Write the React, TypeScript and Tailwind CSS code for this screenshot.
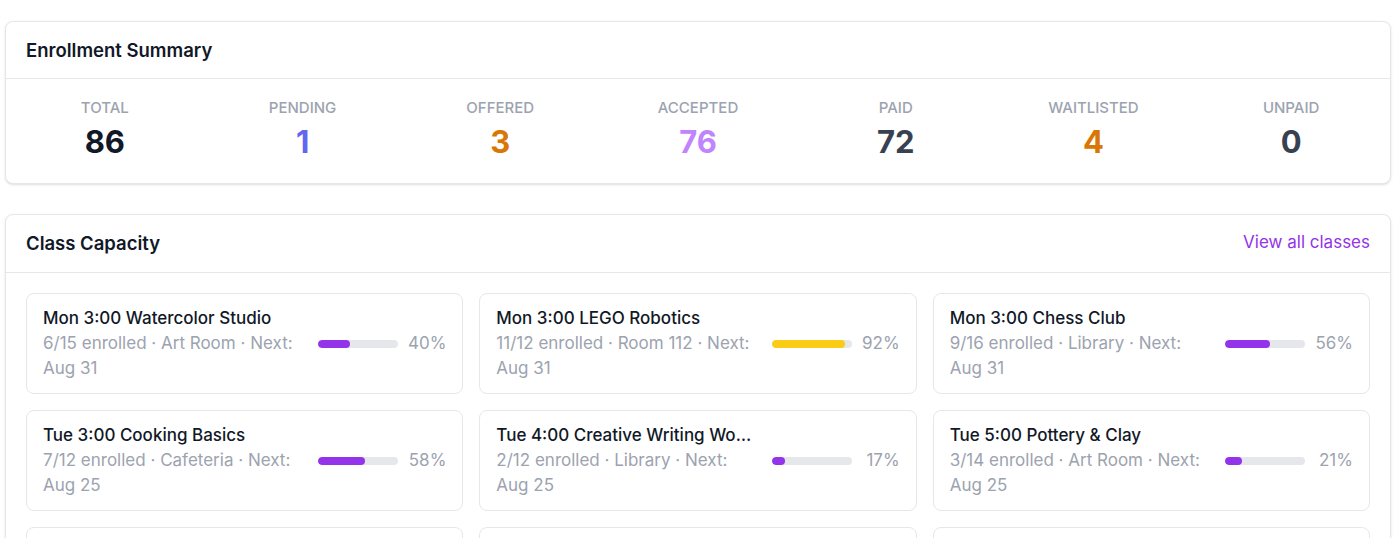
import React from "react";

type Stat = { label: string; value: number; color: string };

const STATS: Stat[] = [
  { label: "Total", value: 86, color: "text-[#111827]" },
  { label: "Pending", value: 1, color: "text-[#6366f1]" },
  { label: "Offered", value: 3, color: "text-[#d97706]" },
  { label: "Accepted", value: 76, color: "text-[#c084fc]" },
  { label: "Paid", value: 72, color: "text-[#374151]" },
  { label: "Waitlisted", value: 4, color: "text-[#d97706]" },
  { label: "Unpaid", value: 0, color: "text-[#374151]" },
];

type ClassItem = {
  name: string;
  enrolled: number;
  capacity: number;
  room: string;
  next: string;
};

const CLASSES: ClassItem[] = [
  { name: "Mon 3:00 Watercolor Studio", enrolled: 6, capacity: 15, room: "Art Room", next: "Aug 31" },
  { name: "Mon 3:00 LEGO Robotics", enrolled: 11, capacity: 12, room: "Room 112", next: "Aug 31" },
  { name: "Mon 3:00 Chess Club", enrolled: 9, capacity: 16, room: "Library", next: "Aug 31" },
  { name: "Tue 3:00 Cooking Basics", enrolled: 7, capacity: 12, room: "Cafeteria", next: "Aug 25" },
  { name: "Tue 4:00 Creative Writing Workshop", enrolled: 2, capacity: 12, room: "Library", next: "Aug 25" },
  { name: "Tue 5:00 Pottery & Clay", enrolled: 3, capacity: 14, room: "Art Room", next: "Aug 25" },
  { name: "Wed 3:00 Drama Club", enrolled: 10, capacity: 18, room: "Auditorium", next: "Aug 26" },
  { name: "Wed 3:00 Coding for Kids", enrolled: 12, capacity: 14, room: "Room 112", next: "Aug 26" },
  { name: "Wed 4:00 Soccer Skills", enrolled: 8, capacity: 20, room: "Field", next: "Aug 26" },
];

function ClassCard({ item }: { item: ClassItem }) {
  const pct = Math.round((item.enrolled / item.capacity) * 100);
  const barColor = pct >= 90 ? "bg-[#facc15]" : "bg-[#9333ea]";
  return (
    <div className="flex items-center rounded-lg border border-[#e5e7eb] bg-white px-4 py-3 text-[17px] leading-[25px]">
      <div className="min-w-0 flex-1 pr-4">
        <div className="truncate font-medium text-[#111827]">{item.name}</div>
        <div className="text-[#9ca3af]">
          {item.enrolled}/{item.capacity} enrolled · {item.room} · Next: {item.next}
        </div>
      </div>
      <div className="h-2 w-20 shrink-0 overflow-hidden rounded-full bg-[#e5e7eb]">
        <div className={`h-full rounded-full ${barColor}`} style={{ width: `${pct}%` }} />
      </div>
      <div className="w-12 shrink-0 text-right text-[#9ca3af]">{pct}%</div>
    </div>
  );
}

export default function App() {
  return (
    <div
      className="min-h-screen bg-white pl-[5px] pr-[9px] pt-[21px] text-[#111827]"
      style={{ fontFamily: "Inter, 'Noto Sans', sans-serif" }}
    >
      {/* Enrollment summary */}
      <section className="rounded-lg border border-[#e5e7eb] bg-white shadow-sm">
        <div className="border-b border-[#e5e7eb] px-5 py-[14px]">
          <h2 className="text-[18.5px] font-semibold leading-7 text-[#111827]">Enrollment Summary</h2>
        </div>
        <div className="grid grid-cols-7 pb-[23px] pt-[19px]">
          {STATS.map((s) => (
            <div key={s.label} className="flex flex-col items-center">
              <span className="text-[15px] font-medium uppercase leading-5 text-[#9ca3af]">{s.label}</span>
              <span className={`mt-[6px] text-[31px] font-bold leading-9 ${s.color}`}>{s.value}</span>
            </div>
          ))}
        </div>
      </section>

      {/* Class capacity */}
      <section className="mt-[30px] rounded-lg border border-[#e5e7eb] bg-white shadow-sm">
        <div className="flex items-center justify-between border-b border-[#e5e7eb] px-5 pb-[15px] pt-[14px]">
          <h2 className="text-[18.5px] font-semibold leading-7 text-[#111827]">Class Capacity</h2>
          <a href="#" className="text-[17px] text-[#9333ea] hover:text-[#7e22ce]">
            View all classes
          </a>
        </div>
        <div className="grid grid-cols-3 gap-4 p-5">
          {CLASSES.map((c) => (
            <ClassCard key={c.name} item={c} />
          ))}
        </div>
      </section>
    </div>
  );
}
